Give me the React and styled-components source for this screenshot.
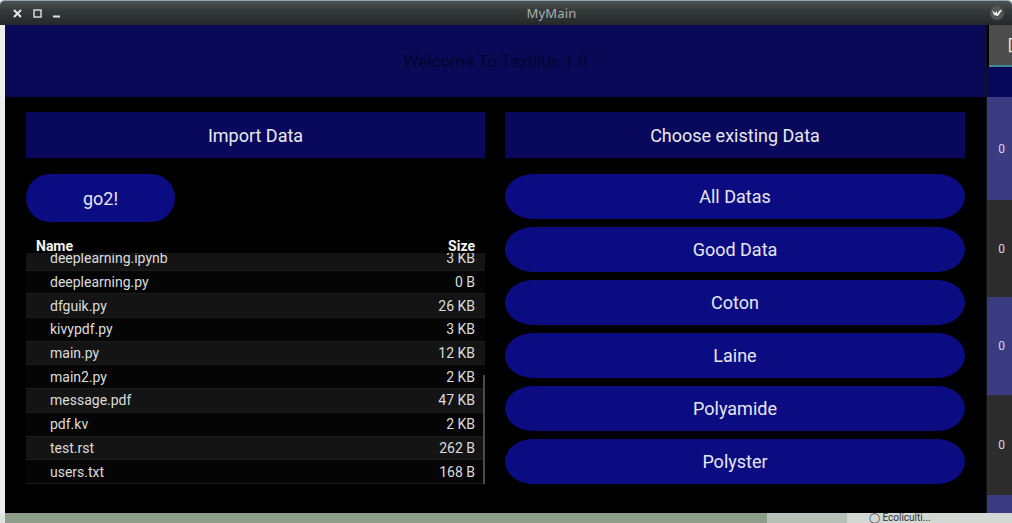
import React from "react";
import styled, { createGlobalStyle } from "styled-components";

const Global = createGlobalStyle`
  html, body { margin: 0; padding: 0; background: #000; }
  body { width: 1012px; height: 523px; overflow: hidden; font-family: Roboto, "Liberation Sans", sans-serif; }
  * { box-sizing: border-box; }
`;

const Screen = styled.div`
  width: 1012px;
  height: 523px;
  display: flex;
  flex-direction: column;
  background: #e6e8e6;
  overflow: hidden;
`;

const TitleBar = styled.div`
  height: 25px;
  flex: none;
  position: relative;
  display: flex;
  align-items: center;
  padding: 0 12px 0 13px;
  background: linear-gradient(#4a5252 0%, #353a3a 40%, #262828 100%);
  border-top: 1px solid #8fa6b0;
  border-radius: 5px 5px 0 0;
  color: #b4b8b8;
`;

const WinButtons = styled.div`
  display: flex;
  align-items: center;
  gap: 11px;
  width: 60px;
`;

const TitleText = styled.div`
  flex: 1;
  text-align: center;
  font-family: "Noto Sans", Lato, sans-serif;
  font-size: 13px;
  color: #a9aeb0;
  padding-left: 40px;
  letter-spacing: 0.2px;
`;

const AppIcon = styled.div`
  width: 14px;
  height: 14px;
  border-radius: 50%;
  background: #555;
  display: flex;
  align-items: center;
  justify-content: center;
  margin-right: -4px;
`;

const Body = styled.div`
  flex: 1;
  display: flex;
  min-height: 0;
`;

const LeftEdge = styled.div`
  width: 5px;
  flex: none;
  background: #eceeec;
`;

const Window = styled.div`
  width: 981px;
  flex: none;
  display: flex;
  flex-direction: column;
  background: #000;
`;

const Header = styled.div`
  height: 72px;
  flex: none;
  background: #090958;
  display: flex;
  align-items: center;
  justify-content: center;
  font-size: 17px;
  color: #04042c;
`;

const Columns = styled.div`
  display: grid;
  grid-template-columns: 459px 460px;
  column-gap: 20px;
  padding: 15px 21px 0 21px;
`;

const Column = styled.div`
  display: flex;
  flex-direction: column;
`;

const SectionTitle = styled.div`
  height: 46px;
  background: #08085c;
  display: flex;
  align-items: center;
  justify-content: center;
  color: #e8e8f0;
  font-size: 18px;
  margin-bottom: 16px;
`;

const PillButton = styled.div`
  height: ${(p) => p.$h || 45}px;
  width: ${(p) => (p.$w ? `${p.$w}px` : "100%")};
  border-radius: ${(p) => (p.$w ? "24px" : "28px / 22.5px")};
  background: #0c0c82;
  display: flex;
  align-items: center;
  justify-content: center;
  color: #e6e6f2;
  font-size: 18px;
  flex: none;
`;

const ButtonStack = styled.div`
  display: flex;
  flex-direction: column;
  gap: 8px;
`;

const FileChooser = styled.div`
  margin-top: 14px;
  display: flex;
  flex-direction: column;
`;

const ListHeader = styled.div`
  height: 17px;
  display: flex;
  justify-content: space-between;
  align-items: flex-end;
  padding: 0 10px;
  font-weight: 700;
  font-size: 14px;
  color: #f2f2f2;
  line-height: 14px;
  position: relative;
  z-index: 1;
`;

const ListViewport = styled.div`
  height: 231px;
  overflow: hidden;
  position: relative;
`;

const RowList = styled.div`
  margin-top: -6px;
`;

const Row = styled.div`
  height: 23.7px;
  display: flex;
  align-items: center;
  justify-content: space-between;
  padding: 0 10px 0 24px;
  font-size: 14px;
  color: #dcdcdc;
  background: ${(p) => (p.$alt ? "#141414" : "#050505")};
  border-bottom: 1px solid #1c1c1c;
`;

const ScrollBar = styled.div`
  position: absolute;
  right: 0;
  top: 122px;
  width: 2px;
  height: 110px;
  background: #4a4a4a;
`;

const SideStrip = styled.div`
  width: 26px;
  flex: none;
  display: flex;
  flex-direction: column;
  border-left: 1px solid #111;
  background: #000;
`;

const SideTab = styled.div`
  height: 42px;
  background: #4c4c4c;
  border-bottom: 2px solid #3a8a9a;
  color: #eee;
  font-size: 15px;
  display: flex;
  align-items: center;
  justify-content: flex-end;
  margin-left: 2px;
  overflow: hidden;
`;

const SideCell = styled.div`
  height: ${(p) => p.$h}px;
  background: ${(p) => p.$bg};
  color: #d8d8e8;
  font-size: 12px;
  display: flex;
  align-items: center;
  justify-content: flex-end;
  padding-right: 7px;
  flex: none;
`;

const Bottom = styled.div`
  height: 10px;
  flex: none;
  display: flex;
  font-size: 10px;
  line-height: 10px;
  color: #333;
`;

const BottomSeg = styled.div`
  width: ${(p) => p.$w}px;
  flex: ${(p) => (p.$w ? "none" : 1)};
  background: ${(p) => p.$bg};
  overflow: hidden;
  white-space: nowrap;
  padding-left: ${(p) => p.$pl || 0}px;
`;

const files = [
  ["deeplearning.ipynb", "3 KB"],
  ["deeplearning.py", "0 B"],
  ["dfguik.py", "26 KB"],
  ["kivypdf.py", "3 KB"],
  ["main.py", "12 KB"],
  ["main2.py", "2 KB"],
  ["message.pdf", "47 KB"],
  ["pdf.kv", "2 KB"],
  ["test.rst", "262 B"],
  ["users.txt", "168 B"],
];

const choices = ["All Datas", "Good Data", "Coton", "Laine", "Polyamide", "Polyster"];

export default function App() {
  return (
    <Screen>
      <Global />
      <TitleBar>
        <WinButtons>
          <svg width="9" height="9" viewBox="0 0 9 9">
            <path d="M1 1 L8 8 M8 1 L1 8" stroke="#e8e8e8" strokeWidth="2" />
          </svg>
          <svg width="9" height="9" viewBox="0 0 9 9">
            <rect x="1" y="1" width="7" height="7" fill="none" stroke="#e0e0e0" strokeWidth="1.4" />
          </svg>
          <svg width="8" height="9" viewBox="0 0 8 9">
            <rect x="0" y="6.5" width="7" height="2" fill="#e0e0e0" />
          </svg>
        </WinButtons>
        <TitleText>MyMain</TitleText>
        <AppIcon>
          <svg width="10" height="8" viewBox="0 0 10 8">
            <path d="M0 1 L3 4 L5 2 L5 5 L8 1 L10 1 L6 7 L2 6 Z" fill="#f4f4f4" />
          </svg>
        </AppIcon>
      </TitleBar>
      <Body>
        <LeftEdge />
        <Window>
          <Header>Welcome To Textilus 1.0</Header>
          <Columns>
            <Column>
              <SectionTitle>Import Data</SectionTitle>
              <PillButton $w={149} $h={48}>go2!</PillButton>
              <FileChooser>
                <ListHeader>
                  <span>Name</span>
                  <span>Size</span>
                </ListHeader>
                <ListViewport>
                  <RowList>
                    {files.map(([n, s], i) => (
                      <Row key={n} $alt={i % 2 === 0}>
                        <span>{n}</span>
                        <span>{s}</span>
                      </Row>
                    ))}
                  </RowList>
                  <ScrollBar />
                </ListViewport>
              </FileChooser>
            </Column>
            <Column>
              <SectionTitle>Choose existing Data</SectionTitle>
              <ButtonStack>
                {choices.map((c) => (
                  <PillButton key={c}>{c}</PillButton>
                ))}
              </ButtonStack>
            </Column>
          </Columns>
        </Window>
        <SideStrip>
          <SideTab>[</SideTab>
          <SideCell $h={30} $bg="#08085a" />
          <SideCell $h={103} $bg="#3b3b82">0</SideCell>
          <SideCell $h={97} $bg="#2c2c2c">0</SideCell>
          <SideCell $h={98} $bg="#3b3b82">0</SideCell>
          <SideCell $h={100} $bg="#2c2c2c">0</SideCell>
          <SideCell $h={18} $bg="#3b3b82" />
        </SideStrip>
      </Body>
      <Bottom>
        <BottomSeg $w={5} $bg="#dfe3df" />
        <BottomSeg $w={762} $bg="#8d9d89" />
        <BottomSeg $w={80} $bg="#b7c0b6" />
        <BottomSeg $bg="#d4d8d4" $pl={22}>◯ Ecoliculti...</BottomSeg>
      </Bottom>
    </Screen>
  );
}
